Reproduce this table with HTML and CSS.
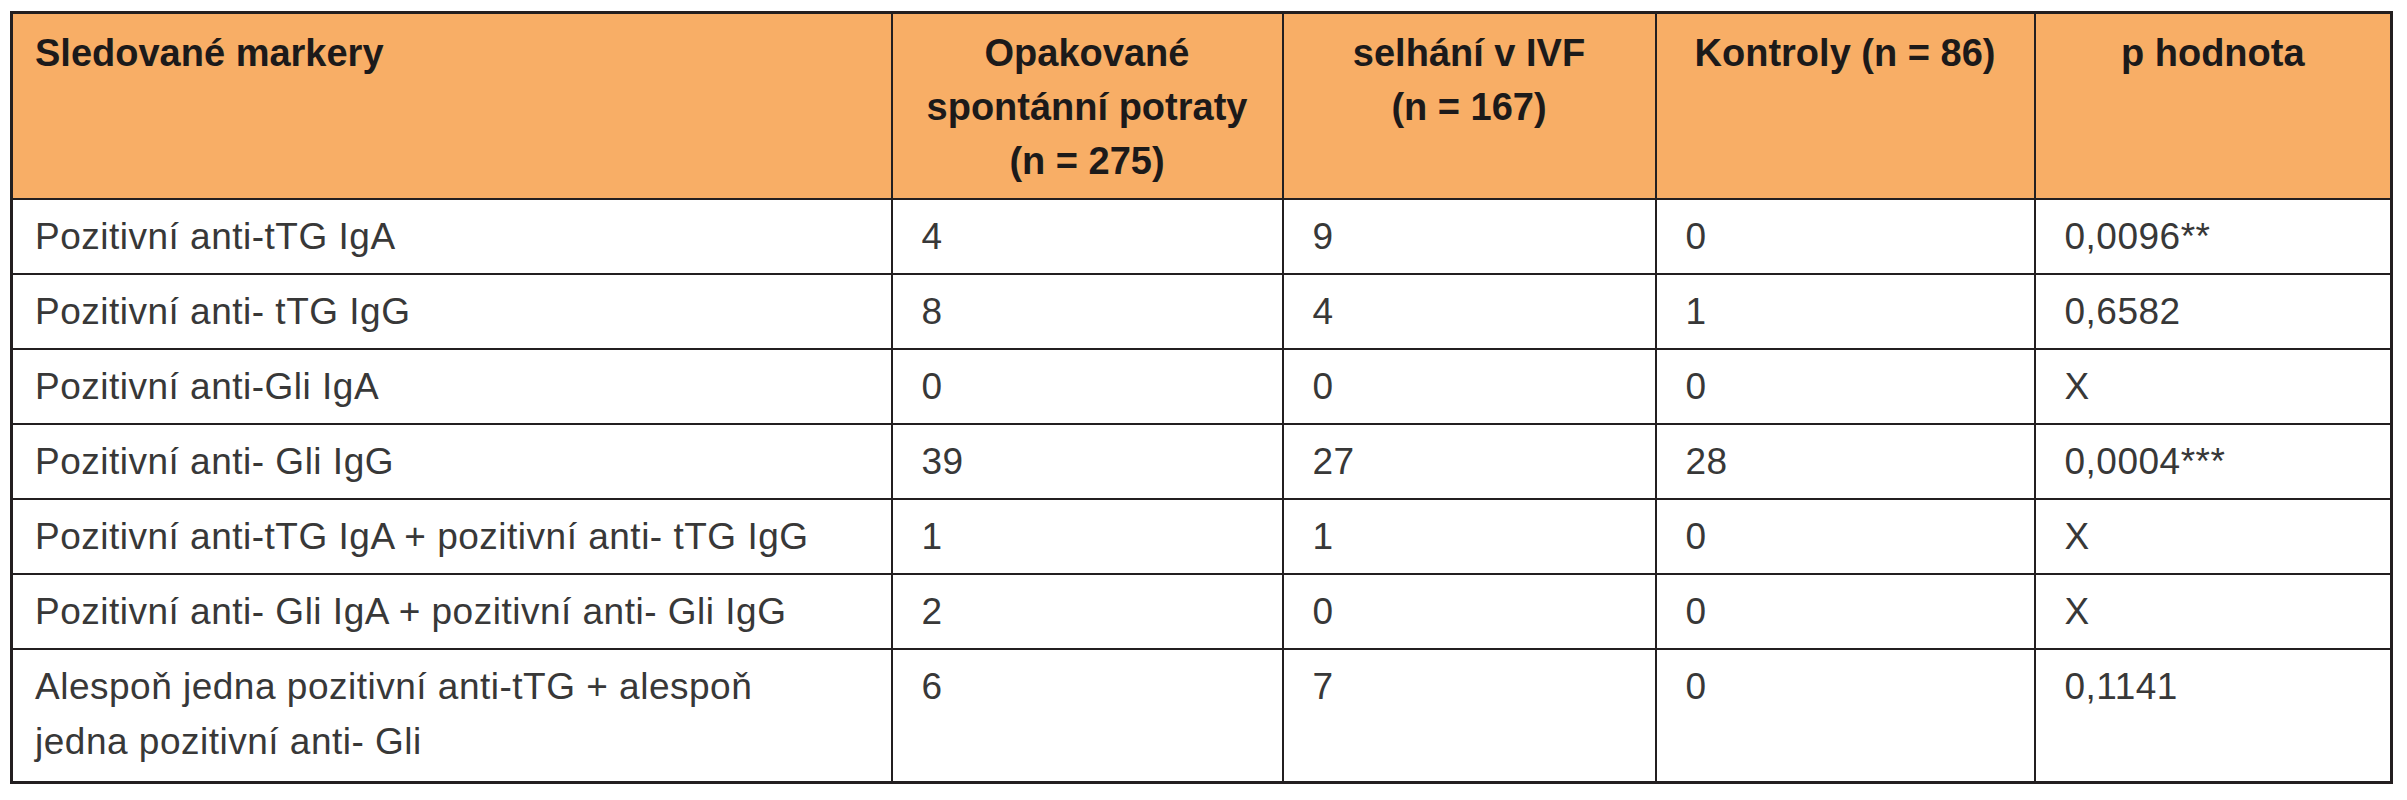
FILE: index.html
```html
<!DOCTYPE html>
<html lang="cs">
<head>
<meta charset="utf-8">
<title>Sledované markery</title>
<link rel="stylesheet" href="styles.css">
</head>
<body>
<table class="data">
  <colgroup>
    <col class="c1"><col class="c2"><col class="c3"><col class="c4"><col class="c5">
  </colgroup>
  <thead>
    <tr>
      <th class="left">Sledované markery</th>
      <th>Opakované<br>spontánní potraty<br>(n = 275)</th>
      <th>selhání v IVF<br>(n = 167)</th>
      <th>Kontroly (n = 86)</th>
      <th>p hodnota</th>
    </tr>
  </thead>
  <tbody>
    <tr><td class="first">Pozitivní anti-tTG IgA</td><td>4</td><td>9</td><td>0</td><td>0,0096**</td></tr>
    <tr><td class="first">Pozitivní anti- tTG IgG</td><td>8</td><td>4</td><td>1</td><td>0,6582</td></tr>
    <tr><td class="first">Pozitivní anti-Gli IgA</td><td>0</td><td>0</td><td>0</td><td>X</td></tr>
    <tr><td class="first">Pozitivní anti- Gli IgG</td><td>39</td><td>27</td><td>28</td><td>0,0004***</td></tr>
    <tr><td class="first">Pozitivní anti-tTG IgA + pozitivní anti- tTG IgG</td><td>1</td><td>1</td><td>0</td><td>X</td></tr>
    <tr><td class="first">Pozitivní anti- Gli IgA + pozitivní anti- Gli IgG</td><td>2</td><td>0</td><td>0</td><td>X</td></tr>
    <tr class="last"><td class="first">Alespoň jedna pozitivní anti-tTG + alespoň<br>jedna pozitivní anti- Gli</td><td>6</td><td>7</td><td>0</td><td>0,1141</td></tr>
  </tbody>
</table>
</body>
</html>
```

FILE: styles.css
```css
html, body {
  margin: 0;
  padding: 0;
  background: #ffffff;
}

body {
  padding: 11px 0 0 10px;
  font-family: "Liberation Sans", Arial, sans-serif;
}

.data {
  border-collapse: collapse;
  table-layout: fixed;
  width: 2380px;
  border: 3px solid #231f20;
}

.c1 { width: 880px; }
.c2 { width: 391px; }
.c3 { width: 373px; }
.c4 { width: 379px; }
.c5 { width: 357px; }

.data th,
.data td {
  border: 2px solid #231f20;
  vertical-align: top;
}

.data th {
  background: #f8ae66;
  color: #1c1a1a;
  font-weight: bold;
  font-size: 38px;
  line-height: 54px;
  padding: 12px 10px 10px;
  text-align: center;
}

.data th.left {
  text-align: left;
  padding-left: 22px;
}

.data td {
  color: #383838;
  font-size: 37px;
  line-height: 55px;
  letter-spacing: 0.5px;
  padding: 9px 10px 9px 29px;
  text-align: left;
}

.data td.first {
  padding-left: 22px;
}

.data tr.last td {
  padding-bottom: 12px;
}
```
